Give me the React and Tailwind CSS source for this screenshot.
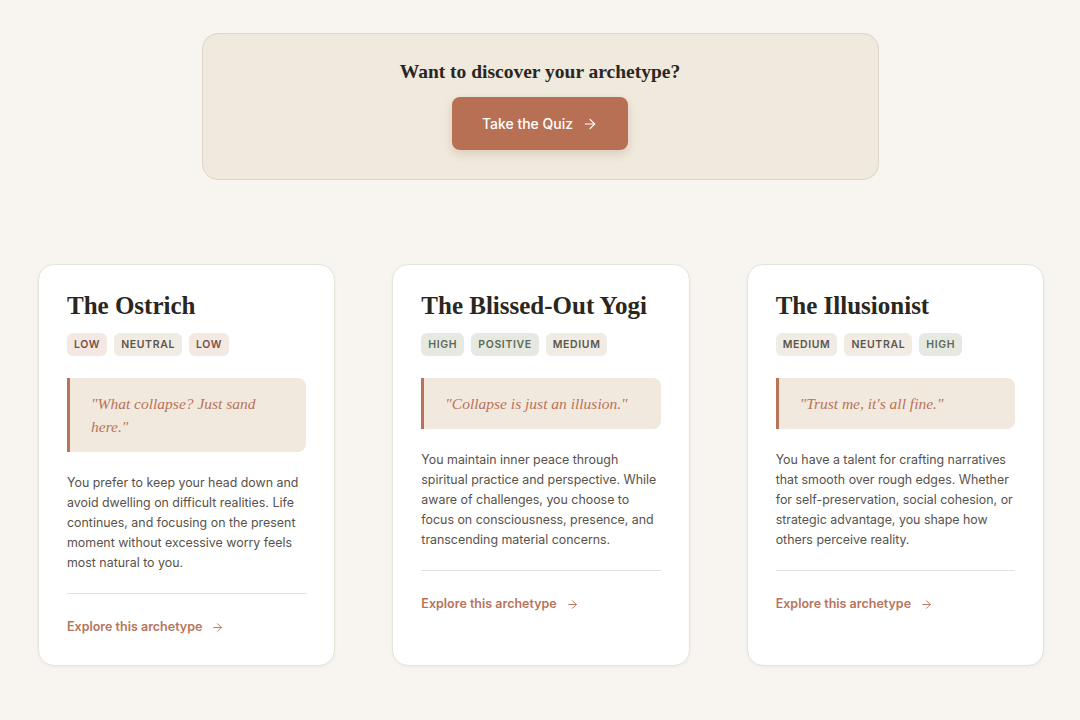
import React from 'react';

const serif = { fontFamily: '"Liberation Serif", "Times New Roman", serif' };

const tagStyles = {
    LOW: 'bg-[#f4e8e3] text-[#7b5046]',
    NEUTRAL: 'bg-[#f0ebe3] text-[#5c554b]',
    MEDIUM: 'bg-[#f0ebe3] text-[#5c554b]',
    HIGH: 'bg-[#e6e9e1] text-[#5c6a56]',
    POSITIVE: 'bg-[#e6e9e1] text-[#5c6a56]',
};

const archetypes = [
    {
        title: 'The Ostrich',
        tags: ['LOW', 'NEUTRAL', 'LOW'],
        quote: '"What collapse? Just sand here."',
        text: 'You prefer to keep your head down and avoid dwelling on difficult realities. Life continues, and focusing on the present moment without excessive worry feels most natural to you.',
    },
    {
        title: 'The Blissed-Out Yogi',
        tags: ['HIGH', 'POSITIVE', 'MEDIUM'],
        quote: '"Collapse is just an illusion."',
        text: 'You maintain inner peace through spiritual practice and perspective. While aware of challenges, you choose to focus on consciousness, presence, and transcending material concerns.',
    },
    {
        title: 'The Illusionist',
        tags: ['MEDIUM', 'NEUTRAL', 'HIGH'],
        quote: '"Trust me, it\'s all fine."',
        text: 'You have a talent for crafting narratives that smooth over rough edges. Whether for self-preservation, social cohesion, or strategic advantage, you shape how others perceive reality.',
    },
];

const Arrow = ({ className, width = 2 }) => (
    <svg className={className} viewBox="0 0 24 24" fill="none" stroke="currentColor" strokeWidth={width} strokeLinecap="round" strokeLinejoin="round">
        <path d="M5 12h14" />
        <path d="m12 5 7 7-7 7" />
    </svg>
);

const Card = ({ item }) => (
    <div className="flex flex-col bg-white border border-[#e8e3da] rounded-2xl px-[28px] pt-[25px] pb-[28px] shadow-[0_1px_3px_rgba(60,40,20,0.06)]">
        <h2 className="text-[25px] leading-[31px] font-bold text-[#2a2620]" style={serif}>{item.title}</h2>
        <div className="flex gap-[7px] mt-[12px]">
            {item.tags.map((t, i) => (
                <span key={i} className={`px-[7px] h-[23px] flex items-center rounded-md text-[10.5px] font-semibold tracking-[0.06em] ${tagStyles[t]}`}>
                    {t}
                </span>
            ))}
        </div>
        <div className="mt-[22px] border-l-[3px] border-[#b8735a] bg-[#f1e9dd] rounded-r-lg py-[14px] pl-[21px] pr-[30px]">
            <p className="italic text-[15.5px] leading-[23px] text-[#b8735a]" style={serif}>{item.quote}</p>
        </div>
        <p className="mt-[21px] text-[12.4px] leading-[20px] text-[#57524b]">{item.text}</p>
        <div className="mt-[20px] border-t border-[#e5e1da] pt-[23px] flex items-center gap-[9px] text-[12.5px] leading-[20px] font-semibold text-[#b8735a]">
            Explore this archetype
            <Arrow className="w-[13px] h-[13px]" width={1.75} />
        </div>
    </div>
);

export default function App() {
    return (
        <div className="min-h-screen bg-[#f8f5f0] pt-[33px] pb-10" style={{ fontFamily: 'Inter, "Noto Sans", sans-serif' }}>
            <div className="mx-auto w-[677px] h-[147px] bg-[#f0e9dd] border border-[#dcd6c7] rounded-2xl flex flex-col items-center pt-[25px]">
                <h3 className="text-[19.5px] leading-[26px] font-bold text-[#2a2620]" style={serif}>Want to discover your archetype?</h3>
                <button className="mt-[12px] w-[176px] h-[53px] bg-[#b87054] rounded-lg text-white text-[14px] font-medium flex items-center justify-center gap-[9px] shadow-[0_4px_10px_rgba(120,70,40,0.18)]">
                    Take the Quiz
                    <Arrow className="w-[16px] h-[16px]" width={1.75} />
                </button>
            </div>
            <div className="mt-[84px] pl-[38px]">
                <div className="grid grid-cols-3 gap-[57px] w-[1006px]">
                    {archetypes.map((a, i) => <Card key={i} item={a} />)}
                </div>
            </div>
        </div>
    );
}
